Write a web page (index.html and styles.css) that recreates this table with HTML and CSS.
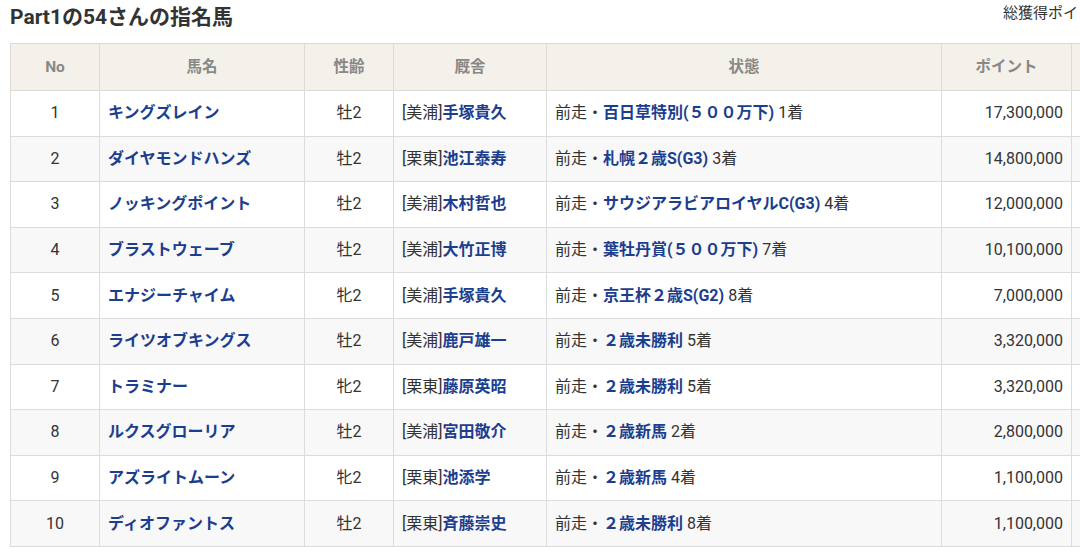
FILE: index.html
```html
<!DOCTYPE html>
<html lang="ja">
<head>
<meta charset="utf-8">
<title>Part1の54さんの指名馬</title>
<link rel="stylesheet" href="styles.css">
</head>
<body>
<div class="page">
  <div class="title-row">
    <h1 class="title">Part1の54さんの指名馬</h1>
    <div class="total">総獲得ポイント：72,840,000</div>
  </div>
  <table class="horses">
    <colgroup>
      <col class="c-no"><col class="c-name"><col class="c-sex"><col class="c-stable"><col class="c-state"><col class="c-pt"><col class="c-extra">
    </colgroup>
    <thead>
      <tr><th>No</th><th>馬名</th><th>性齢</th><th>厩舎</th><th>状態</th><th>ポイント</th><th></th></tr>
    </thead>
    <tbody>
      <tr><td class="no">1</td><td class="name"><a>キングズレイン</a></td><td class="sex">牡2</td><td class="stable">[美浦]<a>手塚貴久</a></td><td class="state">前走・<a>百日草特別(５００万下)</a> 1着</td><td class="pt">17,300,000</td><td></td></tr>
      <tr><td class="no">2</td><td class="name"><a>ダイヤモンドハンズ</a></td><td class="sex">牡2</td><td class="stable">[栗東]<a>池江泰寿</a></td><td class="state">前走・<a>札幌２歳S(G3)</a> 3着</td><td class="pt">14,800,000</td><td></td></tr>
      <tr><td class="no">3</td><td class="name"><a>ノッキングポイント</a></td><td class="sex">牡2</td><td class="stable">[美浦]<a>木村哲也</a></td><td class="state">前走・<a>サウジアラビアロイヤルC(G3)</a> 4着</td><td class="pt">12,000,000</td><td></td></tr>
      <tr><td class="no">4</td><td class="name"><a>ブラストウェーブ</a></td><td class="sex">牡2</td><td class="stable">[美浦]<a>大竹正博</a></td><td class="state">前走・<a>葉牡丹賞(５００万下)</a> 7着</td><td class="pt">10,100,000</td><td></td></tr>
      <tr><td class="no">5</td><td class="name"><a>エナジーチャイム</a></td><td class="sex">牝2</td><td class="stable">[美浦]<a>手塚貴久</a></td><td class="state">前走・<a>京王杯２歳S(G2)</a> 8着</td><td class="pt">7,000,000</td><td></td></tr>
      <tr><td class="no">6</td><td class="name"><a>ライツオブキングス</a></td><td class="sex">牡2</td><td class="stable">[美浦]<a>鹿戸雄一</a></td><td class="state">前走・<a>２歳未勝利</a> 5着</td><td class="pt">3,320,000</td><td></td></tr>
      <tr><td class="no">7</td><td class="name"><a>トラミナー</a></td><td class="sex">牝2</td><td class="stable">[栗東]<a>藤原英昭</a></td><td class="state">前走・<a>２歳未勝利</a> 5着</td><td class="pt">3,320,000</td><td></td></tr>
      <tr><td class="no">8</td><td class="name"><a>ルクスグローリア</a></td><td class="sex">牡2</td><td class="stable">[美浦]<a>宮田敬介</a></td><td class="state">前走・<a>２歳新馬</a> 2着</td><td class="pt">2,800,000</td><td></td></tr>
      <tr><td class="no">9</td><td class="name"><a>アズライトムーン</a></td><td class="sex">牝2</td><td class="stable">[栗東]<a>池添学</a></td><td class="state">前走・<a>２歳新馬</a> 4着</td><td class="pt">1,100,000</td><td></td></tr>
      <tr><td class="no">10</td><td class="name"><a>ディオファントス</a></td><td class="sex">牡2</td><td class="stable">[栗東]<a>斉藤崇史</a></td><td class="state">前走・<a>２歳未勝利</a> 8着</td><td class="pt">1,100,000</td><td></td></tr>
    </tbody>
  </table>
</div>
</body>
</html>
```
FILE: styles.css
```css
html, body {
  margin: 0;
  padding: 0;
  background: #fff;
  overflow: hidden;
}
body {
  font-family: Roboto, "Noto Sans CJK JP", sans-serif;
  color: #333;
}
.page {
  width: 1300px;
  padding: 0 10px;
}
.title-row {
  display: flex;
  align-items: flex-start;
  height: 34px;
}
.title {
  flex: 0 0 993px;
  margin: 0;
  font-size: 21px;
  font-weight: 700;
  line-height: 34px;
  color: #333;
}
.total {
  font-size: 15px;
  line-height: 26px;
  color: #333;
  white-space: nowrap;
}
.horses {
  margin-top: 9px;
  border-collapse: collapse;
  table-layout: fixed;
  width: 1161px;
  font-size: 16px;
}
.c-no { width: 89px; }
.c-name { width: 205px; }
.c-sex { width: 89px; }
.c-stable { width: 153px; }
.c-state { width: 395px; }
.c-pt { width: 130px; }
.c-extra { width: 100px; }
.horses th,
.horses td {
  border: 1px solid #dcdcdc;
  line-height: 20px;
  padding: 0 8px;
  white-space: nowrap;
  overflow: hidden;
}
.horses th {
  height: 46px;
  background: #f4f1ea;
  color: #888;
  font-size: 15.5px;
  font-weight: 700;
  text-align: center;
  border-color: #dedbd4;
}
.horses td {
  height: 44.6px;
}
.horses tbody tr:nth-child(even) td {
  background: #f8f8f8;
}
.horses a {
  color: #1c3e8e;
  font-weight: 700;
  text-decoration: none;
}
.no, .sex { text-align: center; }
.name { padding-left: 9px; }
.state { padding-left: 9px; }
.pt { text-align: right; }
```
